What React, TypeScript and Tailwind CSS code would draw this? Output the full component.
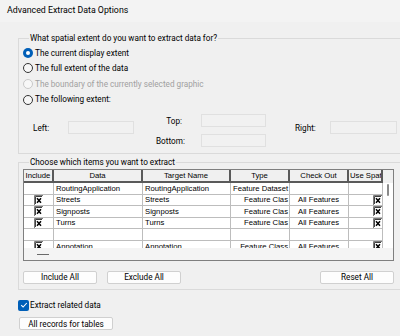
import React from "react";

const ui = { fontFamily: 'Roboto, "Noto Sans", sans-serif' };
const grid = { fontFamily: '"Liberation Sans", Arial, sans-serif' };

const rows = [
  { check: false, data: "RoutingApplication", target: "RoutingApplication", type: "Feature Dataset", typeLeft: true, out: "" },
  { check: true, data: "Streets", target: "Streets", type: "Feature Clas", out: "All Features" },
  { check: true, data: "Signposts", target: "Signposts", type: "Feature Clas", out: "All Features" },
  { check: true, data: "Turns", target: "Turns", type: "Feature Clas", out: "All Features" },
  { check: false, data: "", target: "", type: "", out: "", empty: true },
  { check: true, data: "Annotation", target: "Annotation", type: "Feature Class", out: "All Features" },
];

const cols = ["w-[30px]", "w-[89px]", "w-[88px]", "w-[59px]", "w-[59px]", "w-[34px]"];

function XBox() {
  return (
    <svg width="9" height="10" viewBox="0 0 9 10" className="shrink-0">
      <rect x="0" y="0" width="9" height="10" fill="#fff" />
      <path d="M0.5 10V0.5H9" stroke="#7a7a7a" fill="none" />
      <path d="M1.5 9V1.5H8" stroke="#404040" fill="none" />
      <path d="M3 3.2L7 7.8M7 3.2L3 7.8" stroke="#000" strokeWidth="1.5" />
    </svg>
  );
}

function Radio({ label, checked, disabled }: { label: string; checked?: boolean; disabled?: boolean }) {
  return (
    <div className="flex items-center h-[15.6px]">
      {checked ? (
        <span className="w-[10px] h-[10px] rounded-full bg-[#005fb8] flex items-center justify-center">
          <span className="w-[4px] h-[4px] rounded-full bg-white" />
        </span>
      ) : (
        <span
          className={`w-[10px] h-[10px] rounded-full border bg-[#f7f7f7] ${disabled ? "border-[#c8c8c8]" : "border-[#333]"}`}
        />
      )}
      <span className={`ml-[2px] text-[8.2px] ${disabled ? "text-[#a0a0a0]" : "text-black"}`}>{label}</span>
    </div>
  );
}

function Field({ w }: { w: string }) {
  return <div className={`${w} h-[13px] border border-[#e0e0e0] bg-[#f1f1f1]`} />;
}

function Btn({ label, w }: { label: string; w: string }) {
  return (
    <button className={`${w} h-[13px] bg-[#fdfdfd] border border-[#d0d0d0] rounded-[2px] text-[8.2px] text-black flex items-center justify-center leading-none`}>
      {label}
    </button>
  );
}

export default function App() {
  return (
    <div className="w-[400px] h-[336px] bg-[#f0f0f0] overflow-hidden text-black" style={ui}>
      <div className="h-[22px] bg-[#f3f3f3] pl-[7px] flex items-center text-[8.8px]">Advanced Extract Data Options</div>

      <div className="pl-[18px]">
        <fieldset className="mt-[10px] w-[400px] h-[122px] border border-[#dadada] border-r-0 pl-[4px]">
          <legend className="ml-[6px] px-[1px] text-[8.2px] leading-[12px]">What spatial extent do you want to extract data for?</legend>
          <div className="mt-[1px]">
            <Radio label="The current display extent" checked />
            <Radio label="The full extent of the data" />
            <Radio label="The boundary of the currently selected graphic" disabled />
            <Radio label="The following extent:" />
          </div>
          <div className="flex items-start mt-[7px] text-[8.2px]">
            <div className="flex items-center mt-[7px]">
              <span className="w-[45px] pl-[10px]">Left:</span>
              <Field w="w-[66px]" />
            </div>
            <div className="ml-[22px] flex flex-col gap-[7px]">
              <div className="flex items-center">
                <span className="w-[45px] text-right pr-[19px]">Top:</span>
                <Field w="w-[65px]" />
              </div>
              <div className="flex items-center">
                <span className="w-[45px] text-right pr-[18px]">Bottom:</span>
                <Field w="w-[65px]" />
              </div>
            </div>
            <div className="flex items-center mt-[7px]">
              <span className="ml-[29px] w-[35px]">Right:</span>
              <Field w="w-[67px]" />
            </div>
          </div>
        </fieldset>

        <fieldset className="mt-[2px] w-[400px] h-[134px] border border-[#dadada] border-r-0 pl-[4px]">
          <legend className="ml-[6px] px-[1px] text-[8.2px] leading-[12px]">Choose which items you want to extract</legend>
          <div className="mt-[1px] w-[371px] h-[92px] border border-[#7f7f7f] bg-white flex flex-col" style={grid}>
            <div className="flex-1 relative overflow-hidden">
              <div className="flex h-[13px] bg-[#f0f0f0] text-[7.7px]">
                {["Include", "Data", "Target Name", "Type", "Check Out", "Use Spatial"].map((h, i) => (
                  <div
                    key={h}
                    className={`${cols[i]} shrink-0 overflow-hidden whitespace-nowrap border-r-2 border-b-2 border-[#5a5a5a] flex items-center ${i === 5 ? "pl-[1px]" : "justify-center"}`}
                  >
                    {h}
                  </div>
                ))}
              </div>
              {rows.map((r, ri) => (
                <div key={ri} className="flex h-[11.6px] text-[7.7px]">
                  <div className={`${cols[0]} shrink-0 border-r border-b border-[#bdbdbd] flex items-center justify-center`}>
                    {r.check && <XBox />}
                  </div>
                  <div className={`${cols[1]} shrink-0 border-r border-b border-[#bdbdbd] pl-[2px] flex items-center whitespace-nowrap overflow-hidden`}>{r.data}</div>
                  <div className={`${cols[2]} shrink-0 border-r border-b border-[#bdbdbd] pl-[2px] flex items-center whitespace-nowrap overflow-hidden`}>{r.target}</div>
                  <div
                    className={`${cols[3]} shrink-0 border-r border-b border-[#bdbdbd] flex items-center whitespace-nowrap overflow-hidden ${r.typeLeft ? "pl-[2px]" : "justify-end pr-[1px]"}`}
                  >
                    {r.type}
                  </div>
                  <div className={`${cols[4]} shrink-0 border-r border-b border-[#bdbdbd] pl-[8px] flex items-center whitespace-nowrap overflow-hidden`}>{r.out}</div>
                  <div className={`${cols[5]} shrink-0 border-r border-b border-[#bdbdbd] flex items-center justify-end overflow-hidden`}>
                    {r.check && !r.typeLeft && <XBox />}
                  </div>
                </div>
              ))}
              <div className="absolute right-[4px] top-[14px] w-[2px] h-[12px] rounded-full bg-[#8a8a8a]" />
            </div>
            <div className="h-[12px] bg-[#f4f4f4] flex items-center pl-[13px]">
              <div className="w-[12px] h-[1px] bg-[#6a6a6a]" />
            </div>
          </div>
          <div className="flex mt-[10px] pr-[5px] w-[376px]">
            <Btn label="Include All" w="w-[74px]" />
            <div className="ml-[10px]">
              <Btn label="Exclude All" w="w-[74px]" />
            </div>
            <div className="ml-auto">
              <Btn label="Reset All" w="w-[74px]" />
            </div>
          </div>
        </fieldset>

        <div className="flex items-center mt-[9px]">
          <span className="w-[11px] h-[11px] rounded-[2px] bg-[#005fb8] flex items-center justify-center">
            <svg width="8" height="8" viewBox="0 0 8 8">
              <path d="M1.2 4.2L3.1 6L6.8 2" stroke="#fff" strokeWidth="1.1" fill="none" />
            </svg>
          </span>
          <span className="ml-[1px] text-[8.2px]">Extract related data</span>
        </div>
        <div className="mt-[6px] ml-[1px]">
          <Btn label="All records for tables" w="w-[94px]" />
        </div>
      </div>
    </div>
  );
}
